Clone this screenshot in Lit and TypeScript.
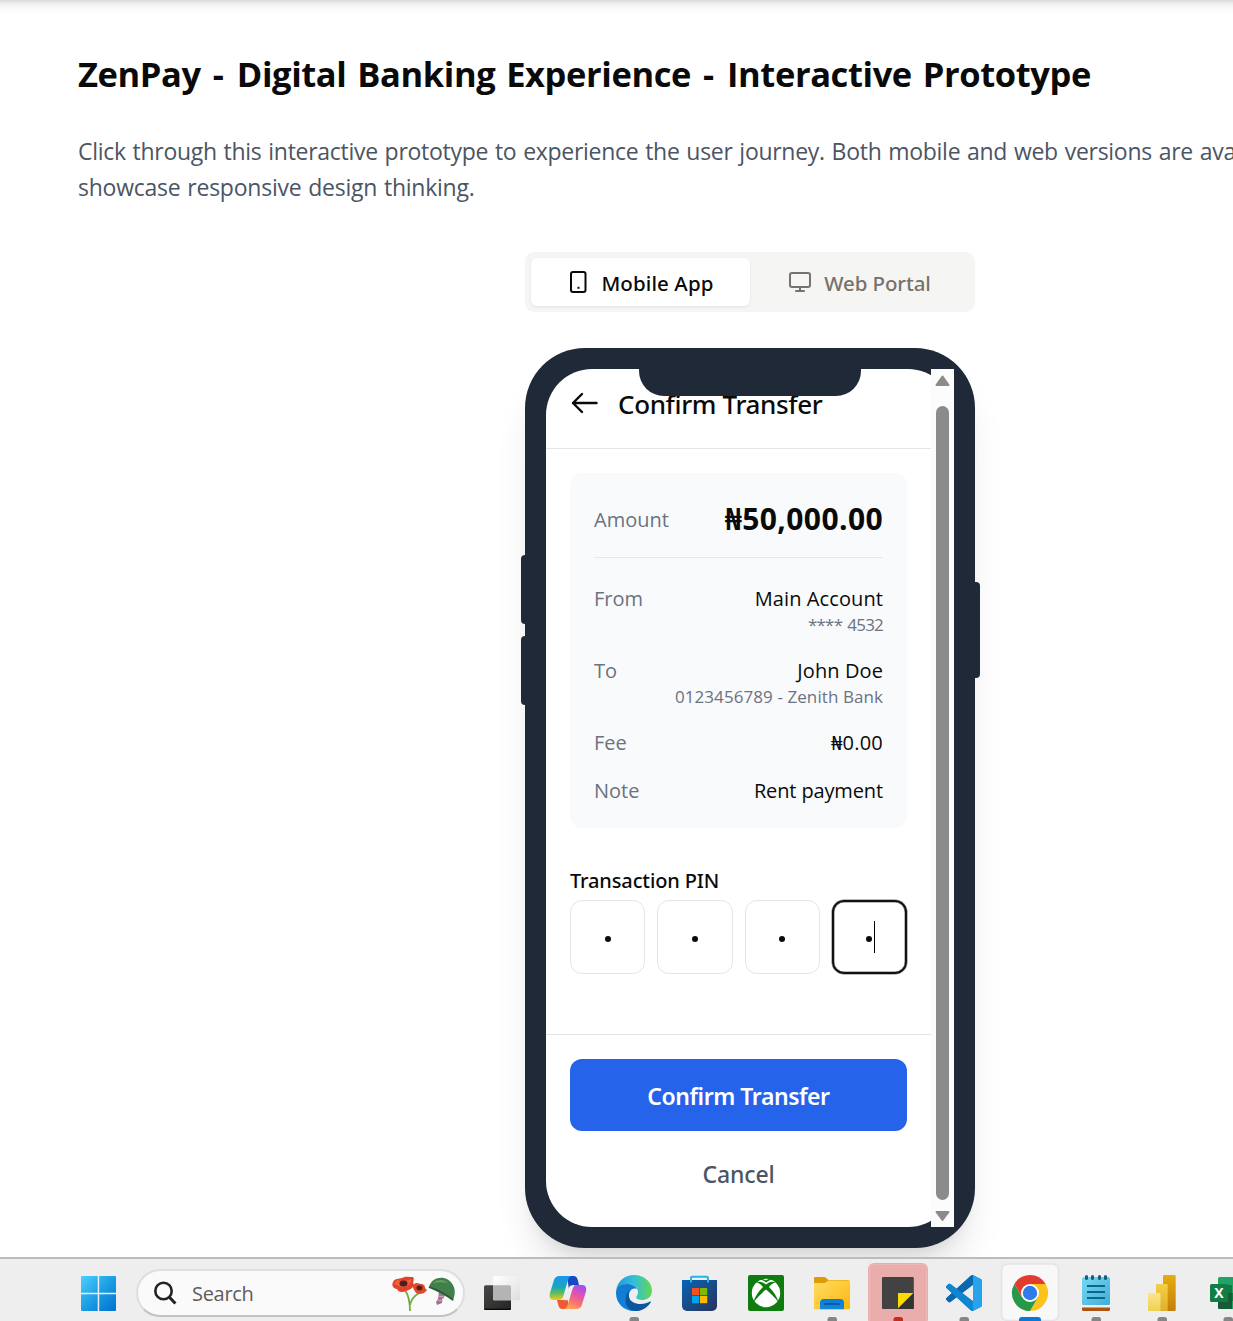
import { LitElement, html, css, svg } from "lit";
import { customElement } from "lit/decorators.js";

@customElement("task-bar")
class TaskBar extends LitElement {
  static styles = css`
    :host { display: block; }
    .bar { display: flex; height: 62px; border-top: 2px solid #bcbcbc; background: #eeeeee; padding-left: 66px; }
    .cell { flex: none; width: 66px; height: 62px; display: block; }
    .search {
      flex: none; box-sizing: border-box; width: 329px; height: 48px; margin: 10px 4px 0 4px; padding: 0 7px 0 15px;
      display: flex; align-items: center; border-radius: 24px; background: #fafafa;
      border: 2px solid #dedede; border-bottom-color: #c2c2c2;
    }
    .label { flex: 1; margin: 1px 0 0 15px; font: 400 20px/28px "Open Sans", sans-serif; color: #5c5c5c; letter-spacing: -0.3px; }
    .lens, .poppies { display: block; }
  `;

  render() {
    const running = svg`<rect x="28.500" y="58" width="9.500" height="6" rx="2.500" fill="#868686"/>`;
    return html`<div class="bar">
      <svg class="cell" viewBox="0 0 66 62">
        <defs>
          <linearGradient id="w" gradientUnits="userSpaceOnUse" x1="15" y1="17" x2="50" y2="52"><stop offset="0" stop-color="#4cd0ff"/><stop offset=".5" stop-color="#1c9ee4"/><stop offset="1" stop-color="#0070d0"/></linearGradient>
        </defs>
        <path fill="url(#w)" d="M16 17h15.700v16.700H15V18a1 1 0 0 1 1-1zM33.200 17H49a1 1 0 0 1 1 1v15.700H33.200zM15 35.200h16.700V52H16a1 1 0 0 1-1-1zM33.200 35.200H50V51a1 1 0 0 1-1 1H33.200z"/>
      </svg>
      <div class="search">
        <svg class="lens" width="24" height="24" viewBox="0 0 24 24" fill="none" stroke="#222" stroke-width="2.600"><circle cx="10.500" cy="10" r="8.200"/><path d="M16.200 16l6.200 6.500" stroke-width="3"/></svg>
        <span class="label">Search</span>
        <svg class="poppies" width="66" height="38" viewBox="0 0 66 38">
          <path d="M15 16c4 6 5 12 5 21M29 19c-5 3-8 7-9 12" fill="none" stroke="#6fae3c" stroke-width="1.800"/>
          <path d="M3 8c2-4 6-3 9-4 3-2 8-1 11-1 2 3-1 5 1 8-1 3-4 5-8 6-4 2-8 1-9-2C4 15 1 12 3 8z" fill="#e0432a"/>
          <path d="M7 6c5 2 10 1 15-1-2 5-3 7-8 8-4 0-6-2-10-3z" fill="#f0613a"/>
          <ellipse cx="13.500" cy="9.500" rx="4" ry="3" fill="#4c2020"/>
          <path d="M24 10c3-2 5 0 7 0 3 0 4 2 4 4l2 2c-2 3-5 4-8 4-3 0-4-3-5-4-1-2-2-4 0-6z" fill="#dd4a2c"/>
          <ellipse cx="29.500" cy="14" rx="3" ry="2.400" fill="#582018"/>
          <path d="M49 17l6 2-1 5-2 1v4l-5 2-1-3 2-3z" fill="#a8708c"/><path d="M48 22l6 1M47 26l6 1" stroke="#d8a8c0" stroke-width="1"/>
          <path d="M39 13C41 6 47 3 54 4c8 2 12 10 10.500 17L63 27C56 22 47 17 38.500 13.500z" fill="#417f4b"/>
          <path d="M43 9c4-4 11-4 15 0-5-1-10-1-15 0z" fill="#65a065"/><path d="M39 13c9 3 18 8 24 13" fill="none" stroke="#285a38" stroke-width="1.500"/>
        </svg>
      </div>
      <svg class="cell" viewBox="0 0 66 62">
        <defs><linearGradient id="d" x1="0" y1="0" x2="1" y2="1"><stop offset="0" stop-color="#484846"/><stop offset="1" stop-color="#242422"/></linearGradient>
        <linearGradient id="l" x1="0" y1="0" x2="1" y2="1"><stop offset="0" stop-color="#fff"/><stop offset="1" stop-color="#dedede"/></linearGradient></defs>
        <rect x="15" y="26.300" width="27" height="24.700" rx="1.500" fill="url(#d)"/><path d="M15.500 50.300h26" stroke="#050505" stroke-width="1.200"/>
        <rect x="24" y="17.300" width="27" height="24" rx="1.200" fill="url(#l)"/><path d="M24 26.300h16.500a1.500 1.500 0 0 1 1.500 1.500v13.500H25.200a1.200 1.200 0 0 1-1.200-1.200z" fill="#b4b4b4"/>
      </svg>
      <svg class="cell" viewBox="0 0 66 62">
        <defs>
          <linearGradient id="c1" x1="0" y1="0" x2="0" y2="1"><stop offset=".1" stop-color="#1a98e8"/><stop offset=".45" stop-color="#16a7bd"/><stop offset=".7" stop-color="#5dbb63"/><stop offset="1" stop-color="#f0cb15"/></linearGradient>
          <linearGradient id="c2" x1=".7" y1="0" x2=".3" y2="1"><stop offset="0" stop-color="#a64cf0"/><stop offset=".45" stop-color="#e8589f"/><stop offset=".75" stop-color="#fa7a68"/><stop offset="1" stop-color="#ffad55"/></linearGradient>
        </defs>
        <path d="M32 17h6.500c2.500 0 3.500 1.500 4.300 4l1.300 5.500h-5c-3 0-4 2-5 5z" fill="#1849c4"/>
        <path d="M34 50h-6.500c-2.500 0-3.500-1.500-4.200-4L22 41h5c3 0 4-2 5-5z" fill="#ef5a35"/>
        <path d="M25 17h12c-2.500 0-3.500 2.500-4.300 5l-4 14c-1 3.500-2.200 5-5.200 5H19c-4 0-5-3-4-7l3.500-11.500C19.500 18.500 21.500 17 25 17z" fill="url(#c1)"/>
        <path d="M41 50H28.500c2.500 0 3.500-2 4.300-4.500l4.200-14c1-3.500 2.300-5.500 5.300-5.500H47c4 0 4.800 3 3.800 7l-3.500 11.500C46.300 48.500 44.500 50 41 50z" fill="url(#c2)"/>
        <path d="M34.500 27.500c1-1 2.500-1.500 5-1.500-1.500 1-2.200 3-3 5.500L34 40c-.6 1-1.800 1.300-5.300 1.300 1.200-.8 1.800-3.300 2.300-5z" fill="#eeeeee"/>
      </svg>
      <svg class="cell" viewBox="0 0 66 62">
        <defs>
          <linearGradient id="e1" x1="0" y1=".5" x2="1" y2=".5"><stop offset="0" stop-color="#1c9be0"/><stop offset=".5" stop-color="#33bfd6"/><stop offset="1" stop-color="#64d850"/></linearGradient>
          <linearGradient id="e2" x1="0" y1="0" x2=".6" y2="1"><stop offset="0" stop-color="#1577cc"/><stop offset="1" stop-color="#0c86e0"/></linearGradient>
        </defs>
        <path d="M15.200 32C16 22.500 23.500 16 33 16c10.500 0 18 7.500 18 15.500 0 6-4.500 9.500-9.500 9.500-4 0-6.300-1-6.300-2.800 0-1.200 1.800-2 1.800-5 0-4-4-8.200-10-8.200-5.500 0-10 3-11.800 7z" fill="url(#e1)"/>
        <path d="M15 34c0-5.500 4.500-9 10.500-9 5.500 0 9 2 10.700 5-4.500-1.800-8.200 1.500-8.200 6 0 7.500 5 13 12 14.500-2 1-4.400 1.500-7 1.500-10.500 0-18-8-18-18z" fill="url(#e2)"/>
        <path d="M30 30.500c-2.500 2-2.800 5-2 8 1.200 4 6 6.500 11.500 6.500 4 0 7-1.200 9.500-2.500.8-.3 1.100.1.700.9C46.500 48.500 40.500 52 35 52c-7 0-10.500-5-10.500-11 0-5 2-8.500 5.500-10.500z" fill="#0c559f"/>
        ${running}
      </svg>
      <svg class="cell" viewBox="0 0 66 62">
        <defs><linearGradient id="s" x1="0" y1="0" x2="1" y2="1"><stop offset="0" stop-color="#0a64b4"/><stop offset="1" stop-color="#26345c"/></linearGradient></defs>
        <path d="M15 21h35v26a5 5 0 0 1-5 5H20a5 5 0 0 1-5-5z" fill="url(#s)"/>
        <path d="M24 23.500V19a1.300 1.300 0 0 1 1.300-1.300h14.400A1.300 1.300 0 0 1 41 19v4.500" fill="none" stroke="#22b4ec" stroke-width="2"/>
        <path d="M25 29h7.200v7.200H25z" fill="#f4511e"/><path d="M33 29h7.200v7.200H33z" fill="#7cb900"/><path d="M25 37h7.200v7.200H25z" fill="#00a3ee"/><path d="M33 37h7.200v7.200H33z" fill="#ffb900"/>
      </svg>
      <svg class="cell" viewBox="0 0 66 62">
        <rect x="15" y="16" width="36" height="36" rx="2" fill="#107c10"/>
        <circle cx="33" cy="34" r="14.200" fill="#fff"/>
        <path d="M23 23.500c4-1.800 7.500 0 10 2 2.500-2 6-3.800 10-2-2.500-.3-5 2-7 4.500 4.500 4.500 8.500 10.500 9.500 15.500-3-4.500-8-9.500-12.500-13-4.500 3.500-9.500 8.500-12.500 13 1-5 5-11 9.500-15.500-2-2.500-4.500-4.800-7-4.500z" fill="#107c10"/>
        <path d="M26 20.500c3-1.500 5 0 7 1 2-1 4-2.500 7-1-3 0-5 1.500-7 3-2-1.500-4-3-7-3z" fill="#107c10"/>
      </svg>
      <svg class="cell" viewBox="0 0 66 62">
        <defs><linearGradient id="f" x1="0" y1="0" x2="1" y2="1"><stop offset="0" stop-color="#ffdc65"/><stop offset="1" stop-color="#fbb80c"/></linearGradient>
        <linearGradient id="fb" x1="0" y1="0" x2="0" y2="1"><stop offset="0" stop-color="#0c7bd4"/><stop offset="1" stop-color="#1488dc"/></linearGradient></defs>
        <path d="M15 19.500c0-1 .6-1.500 1.500-1.500H25c1 0 1.700.3 2.300.9L29.500 21H50v5H15z" fill="#dd9c06"/>
        <path d="M15 24h9.500c1.300 0 2-.4 2.800-1.100L29.500 21.500H50a1 1 0 0 1 1 1V49a1.200 1.200 0 0 1-1.200 1.200H16.200A1.200 1.200 0 0 1 15 49z" fill="url(#f)"/>
        <path d="M21 50.200V44a4 4 0 0 1 4-4h16a4 4 0 0 1 4 4v6.200z" fill="url(#fb)"/><path d="M26 45h14" stroke="#0a4f94" stroke-width="1.600" stroke-linecap="round"/>
        ${running}
      </svg>
      <svg class="cell" viewBox="0 0 66 62">
        <rect x="3" y="4" width="60" height="62" rx="6" fill="#e9aeac"/><rect x="4.500" y="5.500" width="57" height="62" rx="5" fill="none" stroke="#edb9b7"/>
        <rect x="17" y="18" width="31.800" height="32" rx="1" fill="#424242"/><path d="M48.800 34v15a1 1 0 0 1-1 1H33z" fill="#333"/>
        <path d="M33 34h15.300L33 49.300z" fill="#fcdc00"/>
        <rect x="28.500" y="58" width="9.500" height="6" rx="2.500" fill="#c42b1c"/>
      </svg>
      <svg class="cell" viewBox="0 0 66 62">
        <g transform="translate(15 16) scale(1.500)">
          <path fill="#0b7dc6" d="M23.150 2.587L18.210.210a1.494 1.494 0 0 0-1.705.290l-9.460 8.630-4.120-3.128a.999.999 0 0 0-1.276.057L.327 7.261A1 1 0 0 0 .326 8.740L3.899 12 .326 15.260a1 1 0 0 0 .001 1.479L1.650 17.940a.999.999 0 0 0 1.276.057l4.120-3.128 9.460 8.630a1.492 1.492 0 0 0 1.704.290l4.942-2.377A1.500 1.500 0 0 0 24 20.060V3.939a1.500 1.500 0 0 0-.850-1.352zm-5.146 14.861L10.826 12l7.178-5.448v10.896z"/>
          <path fill="#0a69ad" d="M.326 15.260L16.500.500C17 .1 17.600 0 18 .2v6.350L2.926 17.997a1 1 0 0 1-1.276-.057L.327 16.740a1 1 0 0 1 0-1.480z"/>
          <path fill="#0f86d2" d="M.326 8.740L16.506 23.500c.5.400 1.100.500 1.500.300v-6.352L2.926 6.002a1 1 0 0 0-1.276.057L.327 7.261a1 1 0 0 0 0 1.480z"/>
          <path fill="#27a3ee" d="M18.210.210l4.940 2.377A1.500 1.500 0 0 1 24 3.939V20.060a1.500 1.500 0 0 1-.848 1.352l-4.942 2.377c-.1.050-.2.080-.206.080V.150z"/>
        </g>
        ${running}
      </svg>
      <svg class="cell" viewBox="0 0 66 62">
        <rect x="4.500" y="5" width="57" height="56.500" rx="6" fill="#f8f8f8" stroke="#e4e4e4" stroke-width="1.500"/>
        <path d="M33 34L17.400 25A18 18 0 0 1 48.600 25z" fill="#e33b2e"/>
        <path d="M33 25h15.600A18 18 0 0 1 33 52l7.800-13.500z" fill="#fcc31c"/>
        <path d="M17.400 25A18 18 0 0 0 33 52l7.800-13.500L33 34l-7.800 4.500z" fill="#279847"/>
        <path d="M33 25h15.600L40.800 38.500z" fill="#fcc31c"/><path d="M17.400 25h31.200H33l-7.800 13.500z" fill="#e33b2e"/>
        <circle cx="33" cy="34" r="9" fill="#fff"/><circle cx="33" cy="34" r="7.200" fill="#2f7bea"/>
        <rect x="22" y="58" width="22" height="7" rx="3" fill="#0a78d4"/>
      </svg>
      <svg class="cell" viewBox="0 0 66 62">
        <defs><linearGradient id="n" x1="0" y1="0" x2="1" y2="1"><stop offset="0" stop-color="#76d8f2"/><stop offset="1" stop-color="#41aed6"/></linearGradient></defs>
        <path d="M19 46h28v4.500a1.500 1.500 0 0 1-1.500 1.500h-25a1.500 1.500 0 0 1-1.500-1.500z" fill="#ad5310"/><path d="M19 44h28v4.500H19z" fill="#efefef"/>
        <rect x="19" y="18" width="28" height="28" rx="1.500" fill="url(#n)"/>
        <path d="M24 27h18M24 33h18M24 39h18" stroke="#0b668e" stroke-width="2"/>
        <path d="M23.500 17.500v2M29.500 17.500v2M36.500 17.500v2M42.500 17.500v2" stroke="#0e5e80" stroke-width="3" stroke-linecap="round"/>
        ${running}
      </svg>
      <svg class="cell" viewBox="0 0 66 62">
        <defs><linearGradient id="p1" x1="0" y1="0" x2="0" y2="1"><stop offset="0" stop-color="#e6ad10"/><stop offset="1" stop-color="#c47f0c"/></linearGradient>
        <linearGradient id="p2" x1="0" y1="0" x2="0" y2="1"><stop offset="0" stop-color="#f4d048"/><stop offset="1" stop-color="#e0ae2c"/></linearGradient>
        <linearGradient id="p3" x1="0" y1="0" x2="0" y2="1"><stop offset="0" stop-color="#f9e68c"/><stop offset="1" stop-color="#f0d050"/></linearGradient></defs>
        <rect x="34" y="16" width="12.700" height="36" rx="1" fill="url(#p1)"/><rect x="27" y="25" width="11.700" height="27" rx="1" fill="url(#p2)"/><rect x="19" y="34" width="12.500" height="18" rx="1" fill="url(#p3)"/>
        ${running}
      </svg>
      <svg class="cell" viewBox="0 0 66 62">
        <rect x="23" y="18" width="28" height="32" rx="1.500" fill="#21a366"/><path d="M23 34h14v16H24.500a1.500 1.500 0 0 1-1.500-1.500z" fill="#185c37"/><path d="M23 26h14v8H23zM37 34h14v8H37z" fill="#107c41"/>
        <rect x="15" y="25" width="18" height="18" rx="1.500" fill="#117c43"/>
        <text x="24" y="39" text-anchor="middle" font-family="Open Sans, sans-serif" font-weight="700" font-size="14" fill="#fff">X</text>
        ${running}
      </svg>
    </div>`;
  }
}

@customElement("app-root")
class AppRoot extends LitElement {
  static styles = css`
    :host { display: block; width: 1233px; height: 1321px; overflow: hidden; background: #fff; font-family: "Open Sans", "Noto Sans", sans-serif; color: #0a0a0a; }
    .page { box-sizing: border-box; position: relative; height: 1257px; overflow: hidden; padding: 50px 0 0 78px; }
    .edge { position: absolute; left: 0; top: 0; width: 1233px; height: 15px; background: linear-gradient(#dcdedd 0 1px, #e2e2e2 1px, #f4f4f4 5px, #fcfcfc 10px, #fff 15px); }
    h1 { margin: 0; font-size: 34.500px; line-height: 48px; font-weight: 700; white-space: nowrap; letter-spacing: -0.400px; word-spacing: 2.300px; }
    .dash { letter-spacing: 0.800px; }
    .intro { margin: 35px 0 0; width: 1300px; font-size: 23px; line-height: 36px; color: #4b5563; white-space: nowrap; letter-spacing: -0.285px; word-spacing: 1.100px; }
    .rest { letter-spacing: -0.240px; }
    .demo { width: 450px; margin: 47px 0 0 447px; }
    .tabs { display: grid; grid-template-columns: 1fr 1fr; box-sizing: border-box; height: 60px; padding: 6px; border-radius: 9px; background: #f5f5f4; }
    .tab { display: flex; align-items: center; justify-content: center; border-radius: 6px; font: 500 20.500px/30px "Noto Sans", sans-serif; color: #78716c; }
    .tab span { margin-top: 2px; letter-spacing: -0.100px; }
    .tab.on { background: #fff; color: #0a0a0a; box-shadow: 0 1px 3px rgba(0,0,0,.08); }
    .tab.on span { letter-spacing: 0.100px; }
    .tab svg { flex: none; margin-right: 12px; }
    .tab .mobile { margin: 0 13px 0 1px; }
    .phone { position: relative; box-sizing: border-box; height: 900px; margin-top: 36px; padding: 21px; border-radius: 60px; background: #1f2937; box-shadow: 0 30px 37.500px -7.500px rgba(0,0,0,.1), 0 12px 15px -9px rgba(0,0,0,.1); }
    .key { position: absolute; background: #1f2937; width: 8px; }
    .key.up { left: -4px; top: 207px; height: 69px; border-radius: 4px 0 0 4px; }
    .key.down { left: -4px; top: 288px; height: 69px; border-radius: 4px 0 0 4px; }
    .key.power { right: -5px; top: 234px; height: 96px; border-radius: 0 4px 4px 0; }
    .notch { position: absolute; left: 114px; top: 20px; width: 222px; height: 28px; border-radius: 0 0 25px 25px; background: #1f2937; }
    .screen { display: flex; height: 858px; border-radius: 46px; background: #fff; }
    .content { width: 385px; display: flex; flex-direction: column; }
    .head { box-sizing: border-box; height: 80px; padding: 0 24px 9px; display: flex; align-items: center; border-bottom: 1px solid #e5e5e5; }
    .head svg { margin: -3px 19px 0 -1px; }
    .title { font: 500 26px/36px "Noto Sans", sans-serif; letter-spacing: -0.360px; }
    .card { box-sizing: border-box; margin: 24px 24px 0; padding: 26px 24px 0; border-radius: 12px; background: #f9fafb; height: 355px; font-size: 20px; line-height: 30px; }
    .row { display: flex; justify-content: space-between; margin-bottom: 18px; }
    .row.total { align-items: center; height: 42px; padding-bottom: 16px; margin-bottom: 26px; border-bottom: 1px solid #e5e7eb; }
    .name { color: #6b7280; }
    .val { display: flex; flex-direction: column; align-items: flex-end; letter-spacing: 0.100px; }
    .sub { margin: -1px 0 1px; font-size: 17px; line-height: 24px; color: #6b7280; letter-spacing: 0.080px; }
    .stars { letter-spacing: -0.800px; word-spacing: 1.500px; }
    .fee { letter-spacing: 0.200px; }
    .big { margin-top: -2px; font-size: 30px; font-weight: 700; letter-spacing: 0.400px; }
    .note { letter-spacing: -0.130px; }
    .pin { margin: 38px 24px 0; }
    .pin-label { font: 500 20px/30px "Noto Sans", sans-serif; letter-spacing: -0.130px; }
    .boxes { display: grid; grid-template-columns: repeat(4, 1fr); gap: 12px; margin-top: 4px; }
    .box { box-sizing: border-box; height: 74px; border: 1px solid #e5e5e5; border-radius: 12px; display: flex; align-items: center; justify-content: center; padding-top: 4px; }
    .box.on { border: 2px solid #111; box-shadow: 0 0 0 .500px #777, inset 0 0 0 .500px #777; }
    .dot { width: 6px; height: 6px; border-radius: 50%; background: #0a0a0a; }
    .caret { width: 1px; height: 32px; margin: -5px -2px 0 2px; background: #000; }
    .foot { margin-top: 60px; padding: 24px; border-top: 1px solid #e5e5e5; display: flex; flex-direction: column; }
    .btn { box-sizing: border-box; height: 72px; padding-top: 1px; border-radius: 12px; background: #2563eb; color: #fff; display: flex; align-items: center; justify-content: center; font: 600 23px/36px "Noto Sans", sans-serif; letter-spacing: -0.450px; }
    .btn.plain { height: 60px; margin-top: 12px; background: none; color: #4b5563; font-weight: 500; letter-spacing: -0.150px; }
    .scroll { width: 23px; display: flex; flex-direction: column; align-items: center; background: #fcfcfc; }
    .scroll svg { display: block; }
    .thumb { width: 13px; height: 794px; border-radius: 6.500px; background: #8b8b8b; }
  `;

  render() {
    return html`
      <div class="page">
        <div class="edge"></div>
        <h1>ZenPay<span class="dash"> - </span>Digital Banking Experience<span class="dash"> - </span>Interactive Prototype</h1>
        <p class="intro">Click through this interactive prototype to experience the user journey. Both mobile and web versions are ava<br><span class="rest">showcase responsive design thinking.</span></p>
        <div class="demo">
          <div class="tabs">
            <div class="tab on">
              <svg class="mobile" width="20" height="24" viewBox="0 0 20 24" fill="none" stroke="currentColor" stroke-width="2"><rect x="3" y="2" width="14.500" height="20" rx="2"/><path d="M9.500 17.800h2"/></svg>
              <span>Mobile App</span>
            </div>
            <div class="tab">
              <svg width="24" height="24" viewBox="0 0 24 24" fill="none" stroke="currentColor" stroke-width="2" stroke-linecap="round" stroke-linejoin="round"><rect x="2" y="3" width="20" height="14" rx="2"/><path d="M8 21h8M12 17v4"/></svg>
              <span>Web Portal</span>
            </div>
          </div>
          <div class="phone">
            <div class="key up"></div><div class="key down"></div><div class="key power"></div>
            <div class="screen">
              <div class="content">
                <div class="head">
                  <svg width="30" height="24" viewBox="0 0 30 24" fill="none" stroke="#0a0a0a" stroke-width="2.400" stroke-linecap="round" stroke-linejoin="round"><path d="M27.500 12H4M13 3L4 12l9 9"/></svg>
                  <span class="title">Confirm Transfer</span>
                </div>
                <div class="card">
                  <div class="row total"><span class="name">Amount</span><span class="big">₦50,000.00</span></div>
                  <div class="row"><span class="name">From</span><div class="val"><span>Main Account</span><span class="sub stars">**** 4532</span></div></div>
                  <div class="row"><span class="name">To</span><div class="val"><span>John Doe</span><span class="sub">0123456789 - Zenith Bank</span></div></div>
                  <div class="row"><span class="name">Fee</span><span class="fee">₦0.00</span></div>
                  <div class="row"><span class="name">Note</span><span class="note">Rent payment</span></div>
                </div>
                <div class="pin">
                  <div class="pin-label">Transaction PIN</div>
                  <div class="boxes">
                    <div class="box"><i class="dot"></i></div><div class="box"><i class="dot"></i></div><div class="box"><i class="dot"></i></div>
                    <div class="box on"><i class="dot"></i><i class="caret"></i></div>
                  </div>
                </div>
                <div class="foot">
                  <div class="btn">Confirm Transfer</div>
                  <div class="btn plain">Cancel</div>
                </div>
              </div>
              <div class="scroll">
                <svg width="23" height="37" viewBox="0 0 23 37"><path d="M11.500 7.500L17.500 16H5.500z" fill="#8b8b8b" stroke="#8b8b8b" stroke-width="2" stroke-linejoin="round"/></svg>
                <div class="thumb"></div>
                <svg width="23" height="27" viewBox="0 0 23 27"><path d="M11.500 20L17.500 12H5.500z" fill="#8b8b8b" stroke="#8b8b8b" stroke-width="2" stroke-linejoin="round"/></svg>
              </div>
            </div>
            <div class="notch"></div>
          </div>
        </div>
      </div>
      <task-bar></task-bar>`;
  }
}
